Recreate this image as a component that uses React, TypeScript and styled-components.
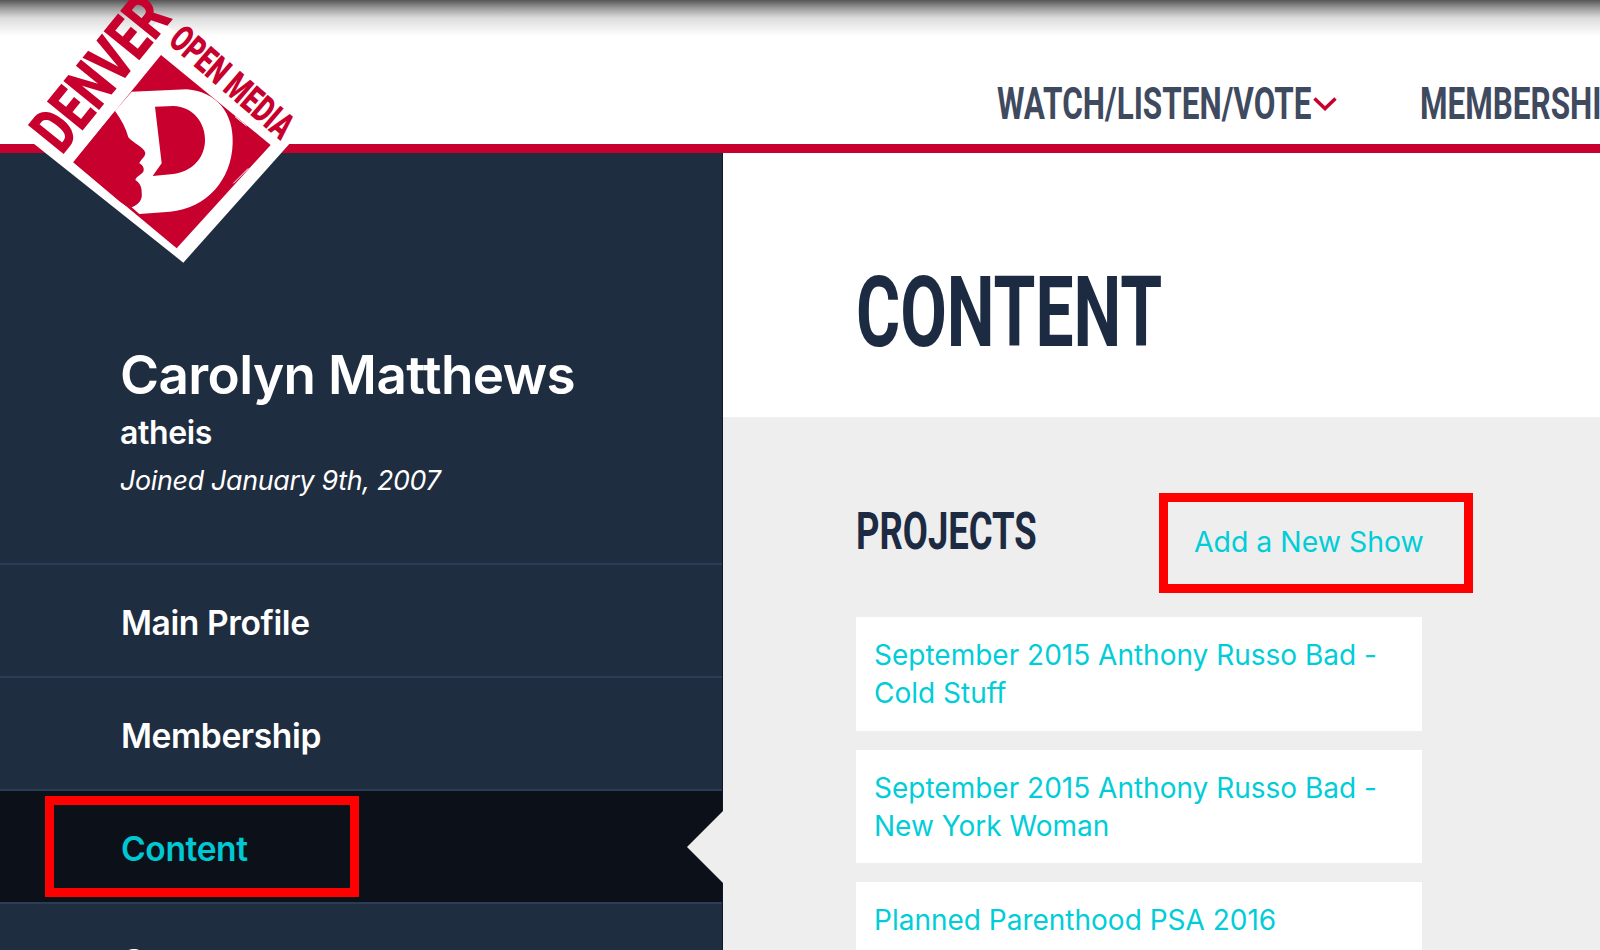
import React from "react";
import styled, { createGlobalStyle } from "styled-components";

const Global = createGlobalStyle`
  html, body { margin: 0; padding: 0; height: 950px; overflow: hidden; background: #fff; }
  * { box-sizing: border-box; }
`;

const condensed = `"Roboto", "Liberation Sans", sans-serif`;
const humanist = `"Inter", "Lato", sans-serif`;

const Page = styled.div`
  position: relative;
  width: 1600px;
  height: 950px;
  overflow: hidden;
  display: flex;
  flex-direction: column;
`;

const Squeezed = styled.span<{ $w: number; $k: number }>`
  display: inline-block;
  width: ${(p) => p.$w}px;
  flex: none;
  white-space: nowrap;
  transform: scaleX(${(p) => p.$k});
  transform-origin: left center;
`;

const Header = styled.header`
  height: 153px;
  flex: none;
  border-bottom: 9px solid #c8002d;
  background: linear-gradient(to bottom, #555 0, #9a9a9a 8px, #dcdcdc 18px, #fff 36px);
  display: flex;
  align-items: flex-start;
  padding: 82px 0 0 997px;
  gap: 83px;
  white-space: nowrap;
`;

const NavItem = styled.a`
  font-family: ${condensed};
  font-weight: 700;
  font-size: 44px;
  line-height: 44px;
  height: 44px;
  color: #3f4a5f;
  display: flex;
  align-items: center;
  gap: 2px;
`;

const Main = styled.div`
  flex: 1;
  display: flex;
  min-height: 0;
`;

const Sidebar = styled.aside`
  width: 723px;
  flex: none;
  background: #1f2d40;
  border-right: 1px solid #10182a;
  color: #fff;
  font-family: ${humanist};
  padding-top: 190px;
`;

const Name = styled.h2`
  margin: 0 0 0 120px;
  font-size: 53px;
  line-height: 64px;
  font-weight: 600;
  letter-spacing: -0.6px;
`;

const Handle = styled.div`
  margin: 5px 0 0 120px;
  font-size: 32px;
  line-height: 42px;
  font-weight: 600;
  letter-spacing: -0.4px;
`;

const Joined = styled.div`
  margin: 6px 0 0 120px;
  font-size: 26.8px;
  line-height: 40px;
  font-style: italic;
  letter-spacing: -0.3px;
`;

const NavList = styled.nav`
  margin-top: 63px;
`;

const SideRow = styled.a<{ $active?: boolean }>`
  position: relative;
  display: flex;
  align-items: center;
  height: 113px;
  padding: 4px 0 0 121px;
  border-top: 2px solid #2b3c56;
  font-size: 33.6px;
  font-weight: 600;
  letter-spacing: -0.4px;
  color: ${(p) => (p.$active ? "#00c8d2" : "#fff")};
  background: ${(p) => (p.$active ? "#0c1119" : "transparent")};
`;

const Pointer = styled.span`
  position: absolute;
  right: -1px;
  top: 20px;
  width: 36px;
  height: 72px;
  background: #eee;
  clip-path: polygon(0 50%, 100% 0, 100% 100%);
`;

const Callout = styled.span<{ $w: number; $h: number; $x: number; $y: number }>`
  position: absolute;
  left: ${(p) => p.$x}px;
  top: ${(p) => p.$y}px;
  width: ${(p) => p.$w}px;
  height: ${(p) => p.$h}px;
  border: 9px solid #f00;
  pointer-events: none;
`;

const Content = styled.main`
  flex: 1;
  display: flex;
  flex-direction: column;
  min-width: 0;
`;

const TitleBand = styled.div`
  height: 264px;
  flex: none;
  background: #fff;
  padding: 120px 0 0 133px;
`;

const Title = styled.h1`
  margin: 0;
  font-family: ${condensed};
  font-weight: 700;
  font-size: 98px;
  line-height: 80px;
  color: #1c2b42;
`;

const Body = styled.div`
  flex: 1;
  background: #eee;
  padding: 88px 0 0 133px;
  font-family: ${humanist};
`;

const SectionHead = styled.div`
  display: flex;
  align-items: flex-start;
  height: 112px;
`;

const SectionTitle = styled.h3`
  margin: 0;
  font-family: ${condensed};
  font-weight: 700;
  font-size: 52px;
  line-height: 54px;
  color: #1c2b42;
`;

const AddLink = styled.a`
  font-size: 28.4px;
  line-height: 40px;
  margin: 17px 0 0 11px;
  color: #00cdd8;
`;

const CardList = styled.div`
  width: 566px;
  display: flex;
  flex-direction: column;
  gap: 19px;
`;

const Card = styled.a`
  background: #fff;
  padding: 19px 18px;
  height: 113.5px;
  font-size: 28px;
  line-height: 38px;
  color: #00cdd8;
  display: block;
  flex: none;
`;

const LogoArt = styled.svg`
  position: absolute;
  left: 0;
  top: 0;
  width: 320px;
  height: 270px;
`;

const Logo = () => (
  <LogoArt viewBox="0 0 960 810" aria-label="Denver Open Media">
    <polygon points="60,398 550,788 900,396 480,60" fill="#fff" />
    <polygon points="483,165 812,435 530,745 220,487" fill="#c8002d" />
    <path
      d="M395,275 L560,268 C650,275 702,340 698,430 C695,540 620,625 510,635 L418,642 L395,622 L300,480 L345,333 Z"
      fill="#fff"
    />
    <path
      d="M345,333 C365,360 378,385 385,412 C400,430 430,440 436,458 C436,472 420,480 418,490 C428,495 434,505 430,515 C422,525 408,530 406,540 C418,548 426,560 425,578 C428,595 420,612 395,622 C380,620 370,612 360,605 L220,487 Z"
      fill="#c8002d"
    />
    <path
      d="M465,320 L520,318 C580,320 618,370 615,425 C612,480 570,515 520,522 L458,528 L485,490 Z"
      fill="#c8002d"
    />
    <g stroke="#fff" strokeWidth="3" fill="none">
      <path d="M560,735 L610,670" />
      <path d="M700,550 L745,505" />
      <path d="M705,350 L740,378" />
    </g>
    <text
      transform="translate(186 468) rotate(-51)"
      fontFamily={condensed}
      fontWeight="900"
      fontSize="194"
      textLength="532"
      lengthAdjust="spacingAndGlyphs"
      fill="#c8002d"
    >
      DENVER
    </text>
    <text
      transform="translate(500 128) rotate(40.8)"
      fontFamily={condensed}
      fontWeight="900"
      fontSize="112"
      textLength="452"
      lengthAdjust="spacingAndGlyphs"
      fill="#c8002d"
    >
      OPEN MEDIA
    </text>
  </LogoArt>
);

const Chevron = () => (
  <svg width="24" height="14" viewBox="0 0 24 14" fill="none" stroke="#c8002d" strokeWidth="3.5">
    <path d="M1.5 1.5 L12 11.5 L22.5 1.5" />
  </svg>
);

export default function App() {
  return (
    <Page>
      <Global />
      <Header>
        <NavItem>
          <Squeezed $w={314} $k={0.715}>WATCH/LISTEN/VOTE</Squeezed>
          <Chevron />
        </NavItem>
        <NavItem>
          <Squeezed $w={200} $k={0.715}>MEMBERSHIP</Squeezed>
        </NavItem>
      </Header>
      <Main>
        <Sidebar>
          <Name>Carolyn Matthews</Name>
          <Handle>atheis</Handle>
          <Joined>Joined January 9th, 2007</Joined>
          <NavList>
            <SideRow>Main Profile</SideRow>
            <SideRow>Membership</SideRow>
            <SideRow $active>
              Content
              <Pointer />
            </SideRow>
            <SideRow>Courses</SideRow>
          </NavList>
        </Sidebar>
        <Content>
          <TitleBand>
            <Title>
              <Squeezed $w={306} $k={0.69}>CONTENT</Squeezed>
            </Title>
          </TitleBand>
          <Body>
            <SectionHead>
              <SectionTitle>
                <Squeezed $w={327} $k={0.7}>PROJECTS</Squeezed>
              </SectionTitle>
              <AddLink>Add a New Show</AddLink>
            </SectionHead>
            <CardList>
              <Card>
                September 2015 Anthony Russo Bad -
                <br />
                Cold Stuff
              </Card>
              <Card>
                September 2015 Anthony Russo Bad -
                <br />
                New York Woman
              </Card>
              <Card>Planned Parenthood PSA 2016</Card>
            </CardList>
          </Body>
        </Content>
      </Main>
      <Logo />
      <Callout $x={45} $y={796} $w={314} $h={101} />
      <Callout $x={1159} $y={493} $w={314} $h={100} />
    </Page>
  );
}
